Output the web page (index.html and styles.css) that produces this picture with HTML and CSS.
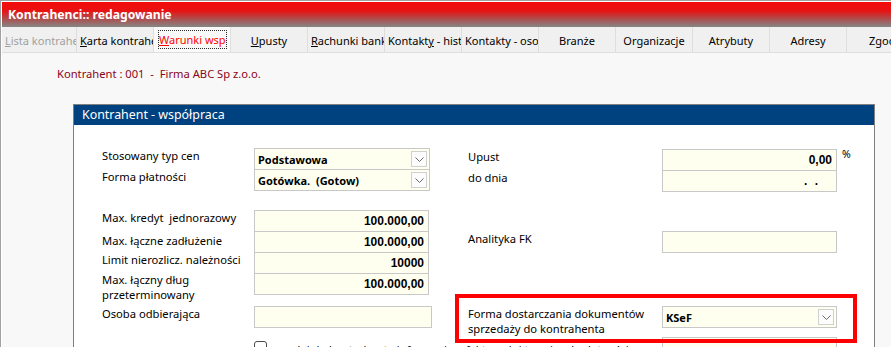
FILE: index.html
```html
<!DOCTYPE html>
<html>
  <head>
    <meta charset="utf-8">
    <title>Kontrahenci:: redagowanie</title>
    <link rel="stylesheet" href="styles.css">
  </head>
  <body>
    <div class="window">
      <div class="titlebar">Kontrahenci:: redagowanie</div>

      <div class="tabs">
        <div class="tab disabled"><u>L</u>ista kontrahentów</div>
        <div class="tab"><u>K</u>arta kontrahenta</div>
        <div class="tab active"><span class="focus"><u>W</u>arunki współpracy</span></div>
        <div class="tab"><u>U</u>pusty</div>
        <div class="tab"><u>R</u>achunki bankowe</div>
        <div class="tab">Kontakt<u>y</u> - historia</div>
        <div class="tab">Kontakty - osoby</div>
        <div class="tab">Branże</div>
        <div class="tab">Organizacje</div>
        <div class="tab">Atrybuty</div>
        <div class="tab">Adresy</div>
        <div class="tab">Zgody</div>
      </div>

      <div class="content">
        <div class="customer">Kontrahent : 001 &nbsp;- &nbsp;Firma ABC Sp z.o.o.</div>

        <div class="panel">
          <div class="panel-header">Kontrahent - współpraca</div>
          <div class="panel-body">
            <div class="form">
              <!-- ceny / upust -->
              <div class="label c1">Stosowany typ cen</div>
              <div class="field select c2">Podstawowa<span class="drop"><svg width="9" height="5" viewBox="0 0 9 5"><polyline points="0.5,0.5 4.5,4.5 8.5,0.5" fill="none" stroke="#6a6a6a" stroke-width="1"/></svg></span></div>
              <div class="label c4 down">Upust</div>
              <div class="field num c5 down">0,00</div>
              <div class="pct c6">%</div>

              <div class="label c1">Forma płatności</div>
              <div class="field select c2">Gotówka.&nbsp; (Gotow)<span class="drop"><svg width="9" height="5" viewBox="0 0 9 5"><polyline points="0.5,0.5 4.5,4.5 8.5,0.5" fill="none" stroke="#6a6a6a" stroke-width="1"/></svg></span></div>
              <div class="label c4 down">do dnia</div>
              <div class="field num date c5 down">. .</div>

              <div class="spacer"></div>

              <!-- limity -->
              <div class="label c1">Max. kredyt&nbsp; jednorazowy</div>
              <div class="field num c2">100.000,00</div>

              <div class="label c1 down">Max. łączne zadłużenie</div>
              <div class="field num c2">100.000,00</div>
              <div class="label c4">Analityka FK</div>
              <div class="field c5"></div>

              <div class="label c1">Limit nierozlicz. należności</div>
              <div class="field num c2">10000</div>

              <div class="label c1 two">Max. łączny dług<br>przeterminowany</div>
              <div class="field num c2">100.000,00</div>

              <div class="spacer"></div>

              <div class="label c1">Osoba odbierająca</div>
              <div class="field wide c2"></div>
              <div class="label c4 two">Forma dostarczania dokumentów<br>sprzedaży do kontrahenta</div>
              <div class="field select c5">KSeF<span class="drop"><svg width="9" height="5" viewBox="0 0 9 5"><polyline points="0.5,0.5 4.5,4.5 8.5,0.5" fill="none" stroke="#6a6a6a" stroke-width="1"/></svg></span></div>

              <div class="spacer"></div>

              <label class="check">
                <span class="box"></span>
                <span class="check-text">wysyłaj do kontrahenta informacje o fakturach i terminach płatności</span>
              </label>
              <div class="field c5"></div>
            </div>

            <div class="highlight"></div>
          </div>
        </div>
      </div>
    </div>
  </body>
</html>
```

FILE: styles.css
```css
body {
  width: 891px;
  height: 347px;
  margin: 0;
  overflow: hidden;
  font-family: "Noto Sans", "Segoe UI", sans-serif;
  font-size: 11.2px;
  color: #000;
  background-color: #fff;
}
.window {
  height: 100%;
  box-sizing: border-box;
  padding: 1px 0 0 1px;
  border-left: 1px solid #a0a0a0;
  border-top: 1px solid #a0a0a0;
  background-color: #fff;
  overflow: hidden;
}
.titlebar {
  height: 25px;
  padding-left: 6px;
  line-height: 26px;
  font-size: 12.2px;
  font-weight: 700;
  color: #fff;
  background: linear-gradient(#f40b0b 0%, #e81212 35%, #aa5252 70%, #868686 100%);
}
.tabs {
  display: flex;
  height: 25px;
  background-color: #f0f0f0;
  border-bottom: 1px solid #dedede;
}
.tab {
  flex: none;
  width: 77px;
  box-sizing: border-box;
  padding: 2px 3px 0;
  border-right: 1px solid #dedede;
  line-height: 23px;
  font-size: 11px;
  text-align: center;
  white-space: nowrap;
  overflow: hidden;
}
.tab:first-child {
  width: 75px;
}
.tab.disabled {
  color: #a0a0a0;
}
.tab.active {
  padding: 0;
  color: #f00;
  background-color: #f9f9f9;
}
.tab .focus {
  display: block;
  margin: 3px 3px 0 4px;
  border: 1px dotted #2a2a2a;
  line-height: 17px;
  text-align: left;
  overflow: hidden;
}
.content {
  height: 300px;
  padding: 13px 0 0 0;
  background-color: #f8f8f8;
}
.customer {
  padding-left: 55px;
  line-height: 16px;
  color: #8a0420;
}
.panel {
  width: 802px;
  box-sizing: border-box;
  margin: 22px 0 0 71px;
  border: 1px solid #808080;
  border-bottom: none;
  background-color: #fff;
}
.panel-header {
  height: 20px;
  padding-left: 8px;
  line-height: 20px;
  font-size: 12.4px;
  color: #fff;
  background-color: #00417f;
}
.panel-body {
  position: relative;
  height: 250px;
  padding: 23px 0 0 28px;
}
.form {
  display: grid;
  grid-template-columns: 152px 176px 38px 194px 175px 20px;
  grid-template-rows: 21px 21px 20px 21px 21px 21px 22px 11px 21px 10px 21px;
}
.spacer {
  grid-column: 1 / -1;
}
.c1 { grid-column: 1; }
.c2 { grid-column: 2; }
.c4 { grid-column: 4; }
.c5 { grid-column: 5; }
.c6 { grid-column: 6; }
.label {
  align-self: start;
  line-height: 16px;
  white-space: nowrap;
}
.label.two {
  line-height: 15px;
}
.label.c1.two {
  margin-top: -1px;
}
.down {
  margin-top: 1px;
}
.label.c1.down {
  margin-top: 2px;
}
.field {
  display: flex;
  align-items: center;
  height: 22px;
  box-sizing: border-box;
  border: 1px solid #c8c8c8;
  background-color: #fffff0;
  font-size: 11px;
  font-weight: 700;
}
.field.select {
  justify-content: space-between;
  padding-left: 3px;
}
.field.num {
  justify-content: flex-end;
  padding-right: 4px;
  font-family: "Liberation Sans", Arial, sans-serif;
  font-size: 12px;
}
.field.num.c2 {
  width: 175px;
}
.field.date {
  padding-right: 16px;
  letter-spacing: 2px;
}
.field.wide {
  width: 178px;
}
.drop {
  display: flex;
  align-items: center;
  justify-content: center;
  width: 16px;
  height: 16px;
  box-sizing: border-box;
  margin-right: 2px;
  border: 1px solid #d0d0d0;
  background-color: #fcfcfc;
}
.pct {
  align-self: start;
  padding: 0 0 0 5px;
  font-size: 10.5px;
  line-height: 13px;
}
.check {
  grid-column: 2 / 5;
  display: flex;
  gap: 5px;
  align-items: flex-start;
  padding-top: 4px;
  line-height: 16px;
  white-space: nowrap;
}
.check .box {
  flex: none;
  width: 13px;
  height: 13px;
  box-sizing: border-box;
  border: 1px solid #4a4a4a;
  border-radius: 3px;
  background-color: #fff;
}
.check-text {
  margin-top: 1px;
}
.highlight {
  position: absolute;
  left: 381px;
  top: 169px;
  width: 402px;
  height: 49px;
  box-sizing: border-box;
  border: 4px solid #f00;
}
```
